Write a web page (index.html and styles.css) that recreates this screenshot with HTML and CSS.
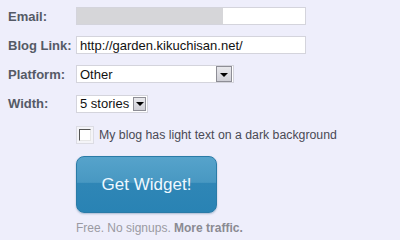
FILE: index.html
```html
<!DOCTYPE html>
<html>
<head>
<meta charset="utf-8">
<link rel="stylesheet" href="styles.css">
</head>
<body>
<div class="form">
  <div class="row">
    <div class="label">Email:</div>
    <div class="field text-field"><span class="masked"></span></div>
  </div>
  <div class="row">
    <div class="label">Blog Link:</div>
    <div class="field text-field"><span class="value">http://garden.kikuchisan.net/</span></div>
  </div>
  <div class="row">
    <div class="label">Platform:</div>
    <div class="field select platform"><span class="value">Other</span><span class="arrow"><span class="tri"></span></span></div>
  </div>
  <div class="row">
    <div class="label">Width:</div>
    <div class="field select width"><span class="value">5 stories</span><span class="arrow small"><span class="tri"></span></span></div>
  </div>
  <div class="check-row">
    <span class="checkbox"><span class="inner"></span></span>
    <span class="check-label">My blog has light text on a dark background</span>
  </div>
  <div class="button-row">
    <div class="button">Get Widget!</div>
  </div>
  <div class="note">Free. No signups. <b>More traffic.</b></div>
</div>
</body>
</html>
```
FILE: styles.css
```css
html, body {
  margin: 0;
  padding: 0;
  background: #eeeefb;
}
body {
  font-family: "Liberation Sans", Arial, sans-serif;
  width: 400px;
  height: 235px;
  overflow: hidden;
}
.form {
  padding: 7px 0 0 8px;
}
.row {
  display: flex;
  align-items: center;
  height: 18px;
  margin-bottom: 11px;
}
.label {
  width: 68px;
  font-size: 13px;
  font-weight: bold;
  color: #555a66;
}
.field {
  box-sizing: border-box;
  height: 18px;
  background: #fff;
  border: 1px solid #d4d4dc;
  display: flex;
  align-items: center;
  font-size: 13px;
  color: #111;
}
.text-field {
  width: 230px;
}
.masked {
  display: block;
  width: 146px;
  height: 16px;
  background: #d6d6d9;
}
.value {
  padding-left: 3px;
  white-space: nowrap;
}
.select {
  justify-content: space-between;
  padding-right: 1px;
}
.platform {
  width: 158px;
}
.width {
  width: 72px;
  margin-top: 1px;
}
.arrow {
  box-sizing: border-box;
  width: 16px;
  height: 16px;
  border: 1px solid #8e8e96;
  background: linear-gradient(#e8e8ec, #cfcfd6);
  display: flex;
  align-items: center;
  justify-content: center;
}
.arrow.small {
  width: 13px;
  height: 14px;
}
.tri {
  width: 0;
  height: 0;
  border-left: 4px solid transparent;
  border-right: 4px solid transparent;
  border-top: 4px solid #000;
  margin-top: 1px;
}
.check-row {
  display: flex;
  align-items: center;
  margin-left: 68px;
  margin-top: 14px;
  height: 18px;
}
.checkbox {
  box-sizing: border-box;
  width: 18px;
  height: 18px;
  border: 1px solid #dcdce4;
  background: #f4f4f8;
  display: flex;
  align-items: flex-start;
  justify-content: flex-start;
  padding: 2px 0 0 2px;
}
.inner {
  box-sizing: border-box;
  width: 12px;
  height: 12px;
  background: #fff;
  border-top: 1px solid #555;
  border-left: 1px solid #555;
  border-right: 1px solid #e6e6e6;
  border-bottom: 1px solid #e6e6e6;
}
.check-label {
  margin-left: 5px;
  font-size: 12.3px;
  color: #4a4a55;
}
.button-row {
  margin: 12px 0 0 68px;
}
.button {
  box-sizing: border-box;
  width: 141px;
  height: 57px;
  border-radius: 8px;
  border: 1px solid #2a7ba7;
  background: linear-gradient(#56a3cb 0%, #4898c2 46%, #2f86b6 48%, #2983b4 100%);
  box-shadow: 0 1px 2px rgba(40, 90, 130, 0.35);
  color: #eef8ff;
  font-size: 17px;
  display: flex;
  align-items: center;
  justify-content: center;
}
.note {
  margin: 8px 0 0 68px;
  font-size: 12px;
  color: #9a9aa2;
}
.note b {
  color: #8a8a92;
}
```
